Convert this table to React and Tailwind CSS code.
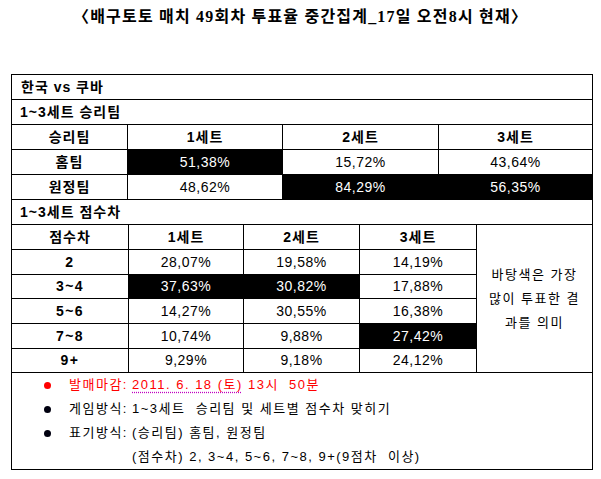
const set1 = [
  { label: '홈팀', vals: ['51,38%', '15,72%', '43,64%'], dark: [true, false, false] },
  { label: '원정팀', vals: ['48,62%', '84,29%', '56,35%'], dark: [false, true, true] },
];

const set2 = [
  { label: '2', vals: ['28,07%', '19,58%', '14,19%'], dark: [false, false, false] },
  { label: '3~4', vals: ['37,63%', '30,82%', '17,88%'], dark: [true, true, false] },
  { label: '5~6', vals: ['14,27%', '30,55%', '16,38%'], dark: [false, false, false] },
  { label: '7~8', vals: ['10,74%', '9,88%', '27,42%'], dark: [false, false, true] },
  { label: '9+', vals: ['9,29%', '9,18%', '24,12%'], dark: [false, false, false] },
];

const cols1 = ['w-[116px]', 'w-[155px]', 'w-[156px]'];

const Bullet = ({ red }) => (
  <span className="flex w-[57px] shrink-0 items-center pl-[32px]">
    <span className={red ? 'h-[7px] w-[7px] rounded-full bg-[#ff0000]' : 'h-[7px] w-[7px] rounded-full bg-[#00000f]'} />
  </span>
);

const App = () => {
  return (
    <div className="h-[479px] w-[601px] bg-white text-black font-['Liberation_Sans','Noto_Sans_CJK_KR',sans-serif]">
      {/* title */}
      <div className="flex h-[74px] justify-center pt-[7px]">
        <div className="h-[20px] text-[16px] font-bold leading-[20px] tracking-[1.2px] font-['Liberation_Serif','Noto_Sans_CJK_KR',serif]">
          〈배구토토 매치 49회차 투표율 중간집계_17일 오전8시 현재〉
        </div>
      </div>

      <div className="ml-[11px] w-[582px] border border-black">
        <div className="flex h-[25px] items-center border-b border-black pl-[9px] text-[14px] font-bold tracking-[1px]">
          한국 vs 쿠바
        </div>
        <div className="flex h-[25px] items-center border-b border-black pl-[8px] text-[14px] font-bold tracking-[1px]">
          1~3세트 승리팀
        </div>

        {/* set winner table */}
        <div className="flex h-[25px] border-b border-black text-[14px] font-bold tracking-[1px]">
          <div className="flex w-[116px] items-center justify-center border-r border-black">승리팀</div>
          <div className="flex w-[155px] items-center justify-center border-r border-black">1세트</div>
          <div className="flex w-[156px] items-center justify-center border-r border-black">2세트</div>
          <div className="flex flex-1 items-center justify-center">3세트</div>
        </div>
        {set1.map((r) => (
          <div key={r.label} className="flex h-[25px] border-b border-black text-[14px]">
            <div className="flex w-[116px] items-center justify-center border-r border-black font-bold tracking-[1px]">
              {r.label}
            </div>
            {r.vals.map((v, i) => (
              <div
                key={i}
                className={`flex items-center justify-center tracking-[0.5px] ${i < 2 ? cols1[i + 1] + ' border-r border-black' : 'flex-1'} ${r.dark[i] ? 'bg-black text-white' : ''}`}
              >
                {v}
              </div>
            ))}
          </div>
        ))}

        <div className="flex h-[25px] items-center border-b border-black pl-[8px] text-[14px] font-bold tracking-[1px]">
          1~3세트 점수차
        </div>

        {/* score diff table */}
        <div className="grid grid-cols-[117px_115px_116px_117px_1fr] grid-rows-[25px_25px_24px_25px_25px_24px] text-[14px]">
          <div className="col-start-5 row-span-6 row-start-1 flex items-center justify-center border-b border-black text-[13px] leading-[24px] tracking-[1.5px] text-center">
            <div>
              바탕색은 가장
              <br />
              많이 투표한 결
              <br />
              과를 의미
            </div>
          </div>
          <div className="flex items-center justify-center border-b border-r border-black font-bold tracking-[1px]">점수차</div>
          <div className="flex items-center justify-center border-b border-r border-black font-bold tracking-[1px]">1세트</div>
          <div className="flex items-center justify-center border-b border-r border-black font-bold tracking-[1px]">2세트</div>
          <div className="flex items-center justify-center border-b border-r border-black font-bold tracking-[1px]">3세트</div>
          {set2.map((r) => [
            <div key={r.label} className="flex items-center justify-center border-b border-r border-black font-bold tracking-[1.5px]">
              {r.label}
            </div>,
            ...r.vals.map((v, i) => (
              <div
                key={r.label + i}
                className={`flex items-center justify-center border-b border-r border-black tracking-[0.5px] ${r.dark[i] ? 'bg-black text-white' : ''}`}
              >
                {v}
              </div>
            )),
          ])}
        </div>

        {/* notes */}
        <div className="h-[96px] text-[13px] leading-[24px] tracking-[1.5px]">
          <div className="flex text-[#ff0000]">
            <Bullet red />
            <span className="w-[63px] shrink-0">발매마감:</span>
            <span>
              <span className="underline decoration-dotted decoration-[#c000c0] underline-offset-[3px]">2011. 6. 18 (토)</span> 13시&nbsp;&nbsp;50분
            </span>
          </div>
          <div className="flex">
            <Bullet />
            <span className="w-[63px] shrink-0">게임방식:</span>
            <span>1~3세트&nbsp;&nbsp;승리팀 및 세트별 점수차 맞히기</span>
          </div>
          <div className="flex">
            <Bullet />
            <span className="w-[63px] shrink-0">표기방식:</span>
            <span>(승리팀) 홈팀, 원정팀</span>
          </div>
          <div className="flex pl-[120px]">
            <span>(점수차) 2, 3~4, 5~6, 7~8, 9+(9점차&nbsp;&nbsp;이상)</span>
          </div>
        </div>
      </div>
    </div>
  );
};

export default App;
